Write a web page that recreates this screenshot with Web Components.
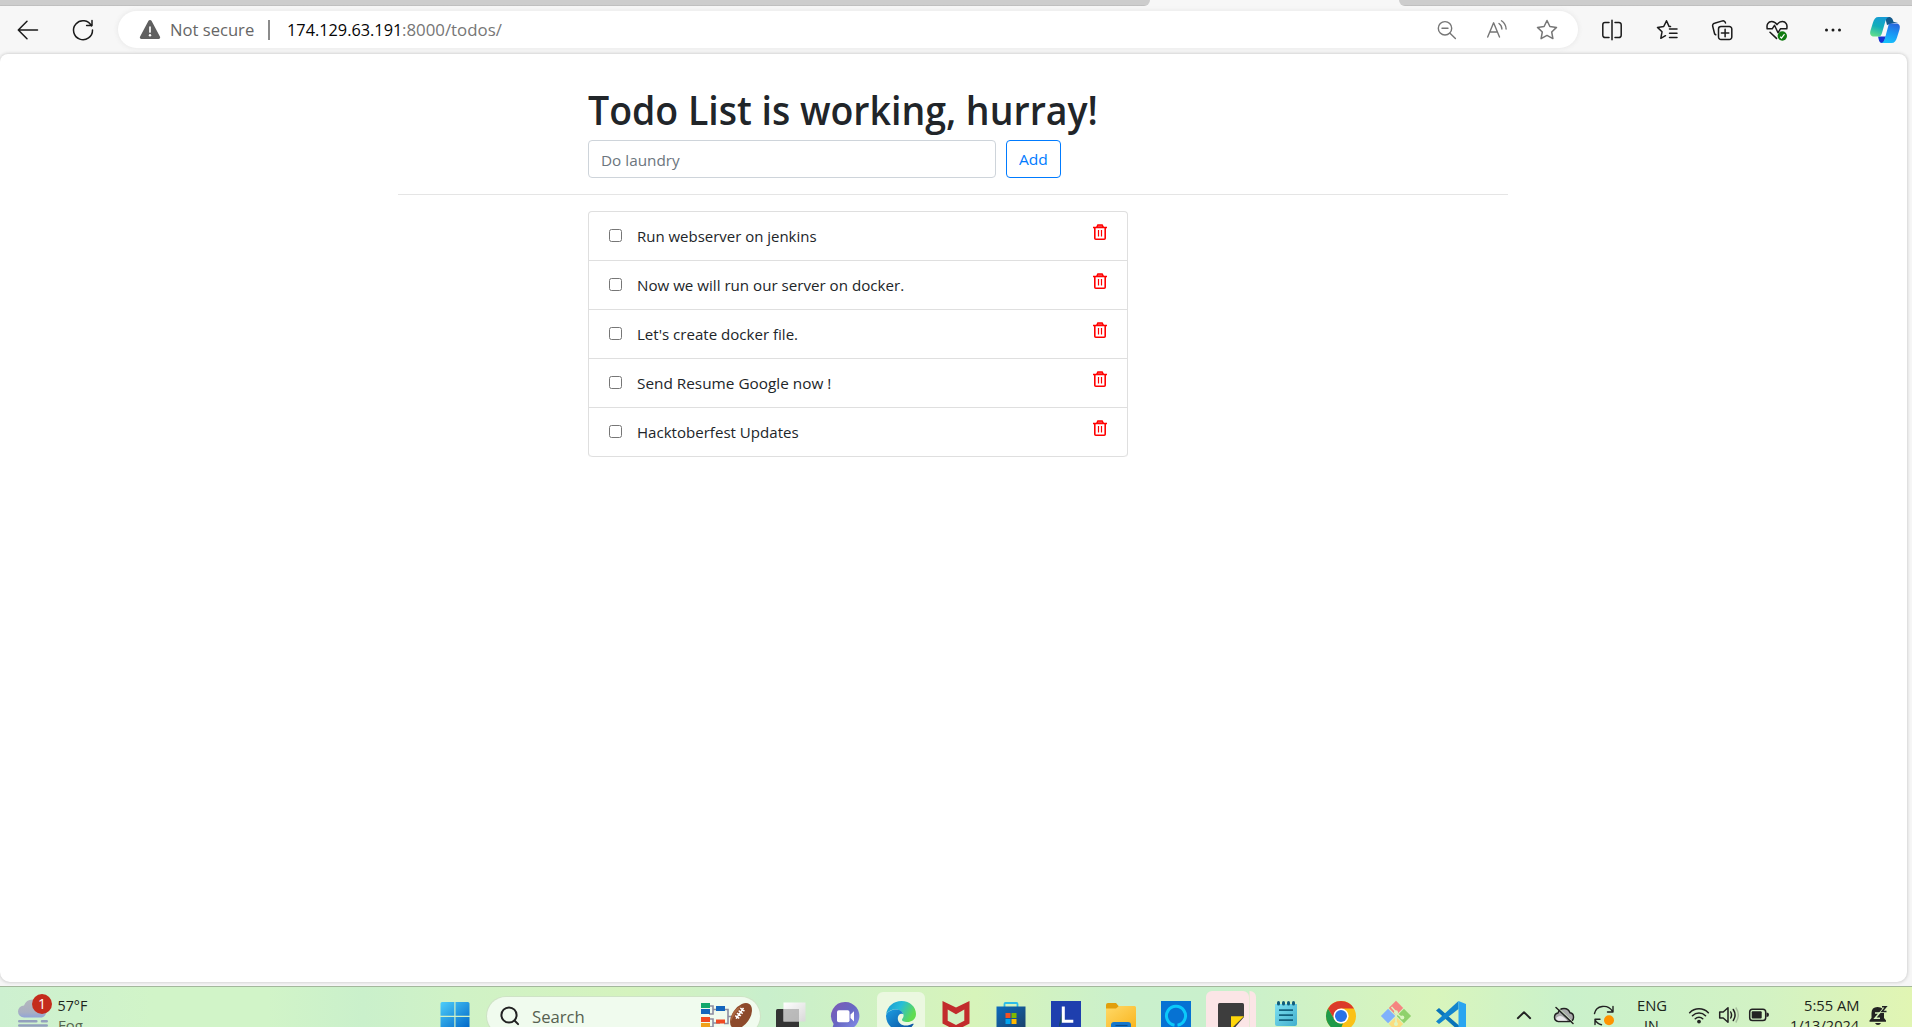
<!DOCTYPE html>
<html lang="en">
<head>
<meta charset="utf-8">
<title>Todo App</title>
<style>
html,body{margin:0;height:100%;overflow:hidden}
body{font-family:"Open Sans","Noto Sans",sans-serif;background:#f6f6f6;color:#212529}
desktop-screen{height:1027px}
</style>
</head>
<body>
<desktop-screen>
  <browser-bar slot="bar"></browser-bar>
  <todo-page slot="page">
    <todo-item w="180">Run webserver on jenkins</todo-item>
    <todo-item w="267">Now we will run our server on docker.</todo-item>
    <todo-item w="161.500">Let's create docker file.</todo-item>
    <todo-item w="194.500">Send Resume Google now !</todo-item>
    <todo-item w="161.500">Hacktoberfest Updates</todo-item>
  </todo-page>
  <task-bar slot="tasks"></task-bar>
</desktop-screen>
<script>
const define = (name, html, ready) => customElements.define(name, class extends HTMLElement {
  connectedCallback() {
    if (this.shadowRoot) return;
    this.attachShadow({mode: 'open'}).innerHTML = html;
    if (ready) ready.call(this, this.shadowRoot);
  }
});

// Text condensed or widened to the width given in the "w" attribute
define('fit-text', `<style>
:host{display:inline-block;white-space:pre;text-align:left}
span{display:inline-block;transform-origin:0 50%}
</style><span><slot></slot></span>`, function (root) {
  const span = root.querySelector('span');
  const w = +this.getAttribute('w');
  const natural = span.offsetWidth;
  this.style.width = w + 'px';
  if (natural) span.style.transform = `scaleX(${w / natural})`;
});

const stroke = 'fill="none" stroke="currentColor" stroke-width="1.5" stroke-linecap="round" stroke-linejoin="round"';
const icons = {
  back: [24, `<path ${stroke} d="M21.500 12H2.500M11 3.200 2.300 12l8.700 8.800"/>`],
  reload: [24, `<path ${stroke} d="M20.500 8A9.500 9.500 0 1 0 21.500 12M21 2.400V7.600H15.600"/>`],
  warn: [24, `<path fill="#5f5f5f" d="M10.500 2.800a1.700 1.700 0 0 1 3 0l8.500 16a1.500 1.500 0 0 1-1.400 2.200H3.400A1.500 1.500 0 0 1 2 18.800z"/><path stroke="#fff" stroke-width="1.700" stroke-linecap="round" d="M12 9v5"/><circle cx="12" cy="17.300" r="1.200" fill="#fff"/>`],
  zoomout: [24, `<g fill="none" stroke="#767676" stroke-width="1.400" stroke-linecap="round"><circle cx="10" cy="10.300" r="6.700"/><path d="M7 10.300h6M15 15.200l5.400 5.300"/></g>`],
  read: [24, `<g fill="none" stroke="#767676" stroke-width="1.400" stroke-linecap="round" stroke-linejoin="round"><path d="M2.700 19 8.600 4.800 14.500 19M4.800 14h7.600M14 5.500q2.800 2 2.900 5.500M16.500 2.800q4.500 3.200 4.600 8.200"/></g>`],
  star: [24, `<path fill="none" stroke="#767676" stroke-width="1.500" stroke-linejoin="round" d="m12 2.500 2.900 6 6.600.900-4.800 4.600 1.200 6.600-5.900-3.200-5.900 3.200 1.200-6.600L2.500 9.400l6.600-.900z"/>`],
  split: [24, `<path ${stroke} d="M12 2.200V21.800M9 4.500H5a2.200 2.200 0 0 0-2.200 2.200v10.600A2.200 2.200 0 0 0 5 19.500h4M15 4.500h4a2.200 2.200 0 0 1 2.200 2.200v10.600a2.200 2.200 0 0 1-2.200 2.200h-4"/>`],
  favs: [24, `<path ${stroke} d="M15.500 8.600 14 8.400 11.500 2.800 8.700 8.500l-6.200.900L7 13.800l-1.200 6.500 4.700-2.600M14.500 11h7.500M14.500 15.200h7.500M14.500 19.400h7.500"/>`],
  coll: [24, `<path ${stroke} d="M5.800 16.800 4.600 15.800 2.700 8.300A2.500 2.500 0 0 1 4.500 5.200L12.500 2.900A2.500 2.500 0 0 1 15.500 5M11 8.500h8.300a2.500 2.500 0 0 1 2.500 2.500v8a2.500 2.500 0 0 1-2.500 2.500H11A2.500 2.500 0 0 1 8.500 19v-8A2.500 2.500 0 0 1 11 8.500zM15.100 11.300v7.400M11.400 15h7.400"/>`],
  heart: [24, `<path ${stroke} d="M2.300 10.800C1.200 6.500 3.200 3.500 6.700 3.500c2.500 0 4.300 1.600 5.300 3.200 1-1.600 2.800-3.200 5.300-3.200 3.500 0 5.500 3 4.400 7.300M2 10.800h5.200L9.500 7.300l3.500 7.500 2.400-4h6.500M5 14.200l6.500 6.200"/><circle cx="17.300" cy="18" r="4.700" fill="#107c10"/><path d="m15.200 18.800 1.300 1.200 3-3.800" fill="none" stroke="#fff" stroke-width="1.200"/>`],
  dots: [24, `<g fill="currentColor"><circle cx="5.500" cy="12" r="1.500"/><circle cx="12" cy="12" r="1.500"/><circle cx="18.500" cy="12" r="1.500"/></g>`],
  copilot: [32, `<defs><linearGradient id="a" x1=".6" y1="0" x2=".3" y2="1"><stop stop-color="#169bd5"/><stop offset=".5" stop-color="#12aeb9"/><stop offset="1" stop-color="#62dd8c"/></linearGradient><linearGradient id="b" x1=".7" y1="0" x2=".4" y2="1"><stop stop-color="#2866dd"/><stop offset=".5" stop-color="#1997f5"/><stop offset="1" stop-color="#17c0fb"/></linearGradient></defs>
   <path fill="#145a8c" d="M16 3h4c3 0 3.800 2.500 4.600 5H29l-11 3z"/><path fill="#1732d2" d="M9 22.500h8L14.500 29H13c-3 0-3-3-4-6.500z"/>
   <path fill="url(#a)" d="M9.500 3H20c-2.500.500-3.300 3-4 5.500l-3 10.500c-.900 3-2 3.500-4.500 3.500H5c-3.500 0-4.500-2.500-3.500-6l2.500-8C5 5 6.500 3 9.500 3z"/>
   <path fill="url(#b)" d="M21.500 9.500H27c3.500 0 4.500 2.500 3.500 6l-2.500 8c-1 3.500-2.500 5.500-5.500 5.500H12.500c2-.500 3-3 3.500-5l3-11c.500-2.500 1-3.500 2.500-3.500z"/>`],
  trash: [16, `<path fill="none" stroke="red" stroke-width="1.600" d="M1 3.500h14M2.800 3.500V14.200q0 1 1 1h8.400q1 0 1-1V3.500"/><path fill="#ff7a7a" stroke="red" stroke-width="1.300" d="M4.700 3.200 5.800 1h4.400l1.100 2.200z"/><path stroke="red" stroke-width="1.200" d="M6.500 6v6.500M9.500 6v6.500"/>`],

  weather: [32, `<defs><linearGradient id="a" x1="0" y1="0" x2="0" y2="1"><stop stop-color="#b3b6bd"/><stop offset=".7" stop-color="#a9b0c2"/><stop offset="1" stop-color="#91a4d8"/></linearGradient></defs><path fill="url(#a)" d="M7 19.500a6 6 0 0 1 0-12A9 9 0 0 1 24 7.500a6.200 6.200 0 0 1 1 12z"/><path stroke="#93a0bd" stroke-width="2.600" stroke-linecap="round" d="M2.300 23.200h17M25 23.200h4.700M2.300 27.500h27.400"/>`],
  start: [30, `<defs><linearGradient id="a" gradientUnits="userSpaceOnUse" x1="0" y1="0" x2="26" y2="30"><stop stop-color="#4fd0fb"/><stop offset="1" stop-color="#0067c8"/></linearGradient></defs><path fill="url(#a)" d="M.5 2.500q0-1.500 1.500-1.500h12.300v13.800H.5zM15.500 1h12.300q1.700 0 1.700 1.500v12.300h-14zM.5 16h13.800v14H.5zM15.500 16h14v14h-14z"/>`],
  search: [20, `<g fill="none" stroke="#222" stroke-width="2" stroke-linecap="round"><circle cx="9" cy="9" r="7.600"/><path d="m14.500 14.500 3.600 3.600"/></g>`],
  sport: [52, `<g fill="none" stroke="#8c8ca0" stroke-width="1.600"><path d="M9 7h4v8H9M13 10.500h7M9 20h4v8H9M13 24h7M24 10.500h4v14h-4M28 17.500h6"/></g><path fill="#11a86b" d="M1 4h9v5H1z"/><path fill="#1365bd" d="M1 10h9v5H1zM16 7h9v5h-9z"/><path fill="#f04b23" d="M1 18h9v5H1zM16 20.500h9v4h-9z"/><path fill="#f0a11b" d="M1 24h9v5H1z"/><g transform="rotate(-55 41 17)"><ellipse cx="41" cy="17" rx="14.500" ry="8.700" fill="#8d4a2b"/><path fill="#c07a4c" opacity=".6" d="M30 12q10-7 20 0-10-2-20 0z"/><path stroke="#fff" stroke-width="1.500" d="M36 14.500h13M38 12v5M41 12v5M44 12v5M47 12v5"/></g>`],
  taskview: [30, `<defs><linearGradient id="a" x1="0" y1="0" x2="1" y2="1"><stop stop-color="#fff"/><stop offset="1" stop-color="#d8d8d8"/></linearGradient></defs><path fill="#333" d="M0 9.500Q0 8 1.500 8H22q1 0 1 1.500V28H0z"/><path fill="url(#a)" d="M7.500 1.500h22v19h-22z"/><path fill="#aaa" opacity=".75" d="M7.500 8H23v12.500H7.500z"/>`],
  chat: [30, `<defs><linearGradient id="a" x1="0" y1="0" x2="1" y2="1"><stop stop-color="#7f58b5"/><stop offset=".5" stop-color="#6768c3"/><stop offset="1" stop-color="#8591ec"/></linearGradient></defs><path fill="url(#a)" d="M14.500 1a14 14 0 1 1-6 26.700L.8 29l1.800-6A14 14 0 0 1 14.500 1z"/><rect x="6" y="9.300" width="12.500" height="12" rx="1.800" fill="#fff"/><path fill="#fff" d="m19.500 13.500 3.500-3.300v10.200l-3.500-3.300z"/>`],
  edge: [30, `<defs><linearGradient id="a" x1="0" y1="0" x2="1" y2=".4"><stop stop-color="#1795d1"/><stop offset=".5" stop-color="#27bdd8"/><stop offset="1" stop-color="#61dc4f"/></linearGradient><linearGradient id="b" x1="0" y1="0" x2="1" y2="1"><stop stop-color="#1b9de2"/><stop offset="1" stop-color="#0b4a99"/></linearGradient></defs><path fill="url(#a)" d="M0 14C1 5 8 0 15.500 0 24 0 30 6 30 13c0 5-4 8-8.500 8-4 0-5.500-1.300-5.500-2.300 0-1 1.600-1.700 1.600-4.200C17.500 11 14 8.500 10 8.500 5 8.500 1.500 10.500 0 14z"/><path fill="url(#b)" d="M0 14.500C1 11 5 8.600 10 8.600c4 0 6.700 2 7.300 4.600-3-1.600-5.500.8-5.500 4.300 0 5 5.500 8.500 11.500 6.500 3-1 4-1.500 4.500-1C25 28 20 30 15.500 30 7 30 0 23.500 0 14.500z"/>`],
  mcafee: [30, `<path fill="#c22c2c" d="m1.500 0 13.500 6.500L28.500 0v22.500L15 29.500l-13.500-7z"/><path fill="#d3f2c2" d="m6.700 8.500 8.300 4.800 8.300-4.800v11.200L15 24l-8.300-4.300z"/>`],
  store: [30, `<defs><linearGradient id="a" x1="0" y1="0" x2="1" y2="1"><stop stop-color="#0c6bbd"/><stop offset="1" stop-color="#1c3f65"/></linearGradient></defs><path fill="none" stroke="#2dbde9" stroke-width="1.800" d="M8.500 6V3q0-1 1-1h11q1 0 1 1v3"/><path fill="url(#a)" d="M.5 5.500h29V26a4 4 0 0 1-4 4h-21a4 4 0 0 1-4-4z"/><path fill="#f25022" d="M9.500 12h5v5h-5z"/><path fill="#7fba00" d="M15.500 12h5v5h-5z"/><path fill="#00a4ef" d="M9.500 18h5v5h-5z"/><path fill="#ffb900" d="M15.500 18h5v5h-5z"/>`],
  lapp: [30, `<path fill="#1e3fae" d="M0 0h30v30H0z"/><path fill="#14495f" d="M11 10v11l-3 5V24z"/><path fill="none" stroke="#fff" stroke-width="3" d="M12.300 5.500v14.700h10"/>`],
  folder: [30, `<defs><linearGradient id="a" x1="0" y1="0" x2="1" y2="1"><stop stop-color="#ffd968"/><stop offset="1" stop-color="#f9b51e"/></linearGradient></defs><path fill="#e19f0c" d="M0 4q0-2 2-2h8l3 3.500V9H0z"/><path fill="url(#a)" d="M0 7.500h10l3-2.500h15.500Q30 5 30 6.500V27H0z"/><path fill="#1577cc" d="M5 24q0-3 3-3h14q3 0 3 3v4H5z"/><path stroke="#0b4c8c" stroke-width="1.200" d="M9.500 24.500h12"/>`],
  alexa: [30, `<path fill="#0672d3" d="M0 0h30v30H0z"/><path fill="none" stroke="#0bc9fa" stroke-width="3" d="M13.500 24.200a9.500 9.500 0 1 1 3 0"/>`],
  sticky: [30, `<path fill="#3d3d3d" d="M2 3.500Q2 2 3.500 2h23q1.500 0 1.500 1.500V16L16 30H2z"/><path fill="#ffd60a" d="M15 15.300h13L15 28z"/>`],
  notepad: [30, `<defs><linearGradient id="a" x1="0" y1="0" x2="1" y2="1"><stop stop-color="#7de0f1"/><stop offset="1" stop-color="#42afcd"/></linearGradient></defs><path fill="url(#a)" d="M4 3h22v20q0 2-2 2H6q-2 0-2-2z"/><g fill="#115c7b"><rect x="6" y="0" width="3" height="4.500" rx="1.500"/><rect x="11" y="0" width="3" height="4.500" rx="1.500"/><rect x="16" y="0" width="3" height="4.500" rx="1.500"/><rect x="21" y="0" width="3" height="4.500" rx="1.500"/></g><path stroke="#13627f" stroke-width="1.800" d="M8 9.200h14M8 14.200h14M8 19.200h14"/>`],
  chrome: [30, `<circle cx="15" cy="15" r="15" fill="#fbc116"/><path fill="#db3a2b" d="M2 7.500a15 15 0 0 1 26 0H15L8.500 18.800z"/><path fill="#1f9a4a" d="M2 7.500 8.500 18.800A7.500 7.500 0 0 0 17 22.200L14 30A15 15 0 0 1 2 7.500z"/><circle cx="15" cy="15" r="7.600" fill="#fff"/><circle cx="15" cy="15" r="6" fill="#2a72e8"/>`],
  git: [30, `<g transform="rotate(45 15 15)"><path fill="#f58581" d="M4.300 4.300H14.500V14.500H4.300z"/><path fill="#8fd16c" d="M15.500 4.300h10.200V14.500H15.500z"/><path fill="#80b1fb" d="M4.300 15.500H14.500v10.200H4.300z"/><path fill="#fadd80" d="M15.500 15.500h10.200v10.200H15.500z"/></g><path stroke="#dcf5c2" stroke-width="1.500" fill="none" d="m10.500 6 4.500 5v12M15 12l6 4.500"/><g fill="#dcf5c2"><circle cx="15" cy="11.300" r="2"/><circle cx="21.300" cy="16.500" r="2"/><circle cx="15" cy="23" r="2"/></g>`],
  code: [30, `<path fill="#0a74b9" d="M0 9.500 3 7l20 17.500V30z"/><path fill="#1385cd" d="M0 20.500 3 23 22.500 8V0z"/><path fill="#2aa5f0" d="M22.500 0 30 3v24l-7.500 3z"/>`],
  chevron: [24, `<path fill="none" stroke="#222" stroke-width="1.900" stroke-linecap="round" stroke-linejoin="round" d="m5.800 15.200 6.200-6 6.200 6"/>`],
  cloud: [24, `<path fill="#a9aaab" stroke="#222" stroke-width="1.400" d="M6.300 18.500a4.300 4.300 0 0 1-.3-8.500 6.300 6.300 0 0 1 12-.2 4.400 4.400 0 0 1-.5 8.700z"/><path fill="#e8e6ea" d="M4 15q4-4 8.500 0l3 2.700H6.500q-2 0-2.500-2.700z"/><path stroke="#d5f2c5" stroke-width="1" d="m5.800 4.500 16 15.500"/><path stroke="#222" stroke-width="1.500" stroke-linecap="round" d="m4 4.500 17 16"/>`],
  sync: [24, `<path fill="none" stroke="#222" stroke-width="1.400" stroke-linecap="round" stroke-linejoin="round" d="M2.500 10.500c1.500-8 13-10 18-2.200M21 3.500V9h-5.500M3 21.500V16.300h5M3 16.800c1.500 2.500 3.500 4.300 6.500 4.900"/><circle cx="17" cy="17.200" r="5" fill="#fe9300"/>`],
  wifi: [24, `<g fill="none" stroke="#222" stroke-width="1.600" stroke-linecap="round"><path d="M2.700 9.700a13 13 0 0 1 18.600 0M5.500 12.700a9.300 9.300 0 0 1 13 0M8.300 15.700a5.300 5.300 0 0 1 7.400 0"/></g><circle cx="12" cy="18.600" r="1.900" fill="#222"/>`],
  sound: [24, `<path fill="none" stroke="#222" stroke-width="1.500" stroke-linejoin="round" stroke-linecap="round" d="M2.700 9h3.500L11 4.700v14.600L6.200 15H2.700zM13.700 9q1.700 3 0 6M16.300 6.500q3.500 5.500 0 11"/><path d="M18.800 4.500q5 7.500 0 15" fill="none" stroke="#222" opacity=".25" stroke-width="1.400"/>`],
  battery: [24, `<rect x="2.700" y="6.200" width="16" height="11.300" rx="2.800" fill="none" stroke="#222" stroke-width="1.500"/><rect x="4.700" y="8.200" width="10" height="7.300" rx="1" fill="#222"/><path fill="#222" d="M19.500 9.500q2.500 0 2.500 2.300t-2.500 2.300z"/>`],
  bell: [24, `<path fill="#222" d="M3.500 17.500 5.500 15V10Q5.500 4 11.500 4q6.500 0 6.500 6v5l2 2.500v1.200H3.500zM9 20h6q-1 2-3 2t-3-2z"/><path fill="none" stroke="#d9f4be" stroke-width="3" d="M16 3.800h4l-4 4.700h4.500"/><path fill="none" stroke="#d9f4be" stroke-width="1.500" d="M9 10h4.500L9 15.200h5"/><path fill="none" stroke="#222" stroke-width="1.500" d="M16 3.800h4l-4 4.700h4.500"/>`]
};
define('ui-icon', '', function (root) {
  const [size, body] = icons[this.getAttribute('name')];
  root.innerHTML = `<style>:host{display:block;flex:none;width:${size}px}svg{display:block;overflow:visible}</style>
  <svg width="${size}" height="${size === 52 ? 32 : size}" viewBox="0 0 ${size} ${size === 52 ? 32 : size}">${body}</svg>`;
});

define('desktop-screen', `<style>
:host{display:flex;flex-direction:column;overflow:hidden}
slot{display:contents}
</style><slot name="bar"></slot><slot name="page"></slot><slot name="tasks"></slot>`);

define('browser-bar', `<style>
:host{display:flex;flex-direction:column;height:54px;flex:none;background:#f7f7f7;color:#1b1b1b}
.tabs{display:flex;justify-content:space-between;height:6px}
.tabs i{background:linear-gradient(#cdcdcd 75%,#b9b9b9)}
.tabs i:first-child{width:1150px;border-radius:0 0 6px 0}
.tabs i:last-child{width:513px;border-radius:0 0 0 6px}
.row{display:flex;align-items:center;height:48px;padding-left:16px}
.pill{display:flex;align-items:center;box-sizing:border-box;width:1460px;height:37px;margin:-1px 21.500px 0 23px;padding:0 19px 0 20px;border-radius:19px;background:#fff;box-shadow:0 0 4px 1px #eaeaea;font-size:17px;line-height:37px}
.reload{margin-left:31px}
.ns{margin-left:8px;color:#666}
.bar{width:2px;height:20px;margin:0 16.500px 0 14px;background:#8b8b8b}
.host{color:#050505}
.rest{color:#767676}
.acts{display:flex;gap:26px;margin-left:auto}
.tools{display:flex;gap:31.300px;margin-right:24.500px}
</style>
<div class="tabs"><i></i><i></i></div>
<div class="row"><ui-icon name="back"></ui-icon><ui-icon class="reload" name="reload"></ui-icon>
<div class="pill"><ui-icon name="warn"></ui-icon><fit-text class="ns" w="84">Not secure</fit-text><span class="bar"></span><fit-text class="host" w="115">174.129.63.191</fit-text><fit-text class="rest" w="100">:8000/todos/</fit-text>
<div class="acts"><ui-icon name="zoomout"></ui-icon><ui-icon name="read"></ui-icon><ui-icon name="star"></ui-icon></div></div>
<div class="tools"><ui-icon name="split"></ui-icon><ui-icon name="favs"></ui-icon><ui-icon name="coll"></ui-icon><ui-icon name="heart"></ui-icon><ui-icon name="dots"></ui-icon></div>
<ui-icon name="copilot"></ui-icon></div>`);

define('todo-page', `<style>
:host{display:block;box-sizing:border-box;flex:none;width:1907px;height:928px;margin-bottom:4px;border-radius:8px 8px 10px 10px;background:#fff;box-shadow:0 0 3px 1px #d4d4d4;padding:31.500px 399.500px 0 397.500px}
h1{margin:0 0 6.500px 190px;font-size:39px;font-weight:600;line-height:48px;height:48px}
form{display:flex;gap:10px;margin-left:190px;font-size:15.300px;line-height:38px}
.field{box-sizing:border-box;width:408px;height:38px;border:1px solid #ced4da;border-radius:4px;padding-left:12.500px;color:#6c757d}
.add{box-sizing:border-box;width:55px;height:38px;border:1px solid #007bff;border-radius:4px;padding-left:12px;color:#007bff;line-height:36px}
hr{margin:16px 0;border:0;border-top:1px solid #e5e5e5}
.list{box-sizing:border-box;width:540px;margin-left:190px;border:1px solid #dfdfdf;border-bottom:0;border-radius:4px}
</style>
<h1><fit-text w="510">Todo List is working, hurray!</fit-text></h1>
<form><div class="field"><fit-text w="79">Do laundry</fit-text></div><div class="add"><fit-text w="28.500">Add</fit-text></div></form>
<hr>
<div class="list"><slot></slot></div>`);

define('todo-item', `<style>
:host{display:flex;box-sizing:border-box;height:49px;padding:0 19px 0 20.500px;border-bottom:1px solid #dfdfdf;font-size:15.300px;line-height:48px}
:host(:last-child){border-radius:0 0 4px 4px}
.box{box-sizing:border-box;width:13px;height:13px;margin:17px 14.600px 0 0;border:1px solid #767676;border-radius:2.500px;background:#fff}
ui-icon{margin:12px 0 0 auto}
</style><span class="box" role="checkbox" aria-checked="false"></span><fit-text></fit-text><ui-icon name="trash"></ui-icon>`, function (root) {
  const label = document.createElement('fit-text');
  label.setAttribute('w', this.getAttribute('w'));
  label.textContent = this.textContent;
  root.querySelector('fit-text').replaceWith(label);
});

define('task-bar', `<style>
:host{display:flex;flex:none;box-sizing:border-box;height:41px;overflow:hidden;border-top:1px solid #a3b79c;font-size:14.300px;line-height:20px;color:#1c241a;
background:linear-gradient(90deg,#cdf0d0,#d1f4c8 8%,#d1f4c8 14%,#caf0cb 19%,#d0f2c6 24%,#d5f3be 33%,#c9efcc 40%,#d7f4ba 51%,#caf0cc 59%,#c9f0cc 64%,#d9f5bc 75%,#caf1cb 82%,#d2f2c4 92%,#e1f5b3)}
.weather{display:flex;width:422.500px;padding:11px 0 0 17px;gap:8.500px}
.ico{position:relative}
.badge{position:absolute;left:15px;top:-4px;width:20px;height:20px;border-radius:50%;background:#c42b1c;color:#fff;text-align:center;line-height:20px;font-size:14px}
.lines{display:flex;flex-direction:column}
.fog{color:#56654f}
.start{margin-top:14px}
.search{display:flex;box-sizing:border-box;width:273px;height:38px;margin:10px 0 0 17px;border-radius:19px;background:#f0fbee;box-shadow:0 0 0 1px #cfe3c6;padding:0 8px 0 13px;line-height:39px;font-size:17px;color:#56604f}
.search ui-icon:first-child{margin:9px 12px 0 0}
.search ui-icon:last-child{margin:2px 0 0 auto}
.apps{display:flex;margin-left:3.500px}
.apps>div{display:flex;justify-content:center;width:55px;padding-top:14px;height:40px;box-sizing:border-box}
.apps .on{width:48px;margin:5px 3.500px 0;padding-top:9px;border-radius:6px 6px 0 0;background:#ebf8e0}
.apps .pink{width:43px;margin:4px 0 0 2.500px;padding:10px 0 0 7px;border-radius:6px 6px 0 0;background:#fbe5e6}
.apps .pink2{width:7px;margin:4px 2.500px 0 0;border-left:1px solid #e6e9d3;padding:0;border-radius:0 6px 0 0;background:#fbe5e6}
.tray{display:flex}
.tray ui-icon{margin-top:16px}
</style>
<div class="weather"><div class="ico"><ui-icon name="weather"></ui-icon><span class="badge">1</span></div>
<div class="lines" style="margin-top:-2px"><fit-text w="30">57°F</fit-text><fit-text class="fog" w="25">Fog</fit-text></div></div>
<ui-icon class="start" name="start"></ui-icon>
<div class="search"><ui-icon name="search"></ui-icon><fit-text w="53">Search</fit-text><ui-icon name="sport"></ui-icon></div>
<div class="apps">
<div><ui-icon name="taskview"></ui-icon></div><div><ui-icon name="chat"></ui-icon></div><div class="on"><ui-icon name="edge"></ui-icon></div><div><ui-icon name="mcafee"></ui-icon></div><div><ui-icon name="store"></ui-icon></div><div><ui-icon name="lapp"></ui-icon></div><div><ui-icon name="folder"></ui-icon></div><div><ui-icon name="alexa"></ui-icon></div><div class="pink"><ui-icon name="sticky"></ui-icon></div><div class="pink2"></div><div><ui-icon name="notepad"></ui-icon></div><div><ui-icon name="chrome"></ui-icon></div><div><ui-icon name="git"></ui-icon></div><div><ui-icon name="code"></ui-icon></div></div>
<div class="tray">
<ui-icon name="chevron" style="margin-left:34px"></ui-icon><ui-icon name="cloud" style="margin-left:16px"></ui-icon><ui-icon name="sync" style="margin-left:16px"></ui-icon>
<div class="lines" style="margin:9px 0 0 20.500px;align-items:center"><fit-text w="30">ENG</fit-text><fit-text w="15">IN</fit-text></div>
<ui-icon name="wifi" style="margin-left:20px"></ui-icon><ui-icon name="sound" style="margin-left:6px"></ui-icon><ui-icon name="battery" style="margin-left:6px"></ui-icon>
<div class="lines" style="margin:8.500px 0 0 19px;align-items:flex-end"><fit-text w="55.500">5:55 AM</fit-text><fit-text w="69.500">1/13/2024</fit-text></div>
<ui-icon name="bell" style="margin-left:7px"></ui-icon></div>`);
</script>
</body>
</html>
